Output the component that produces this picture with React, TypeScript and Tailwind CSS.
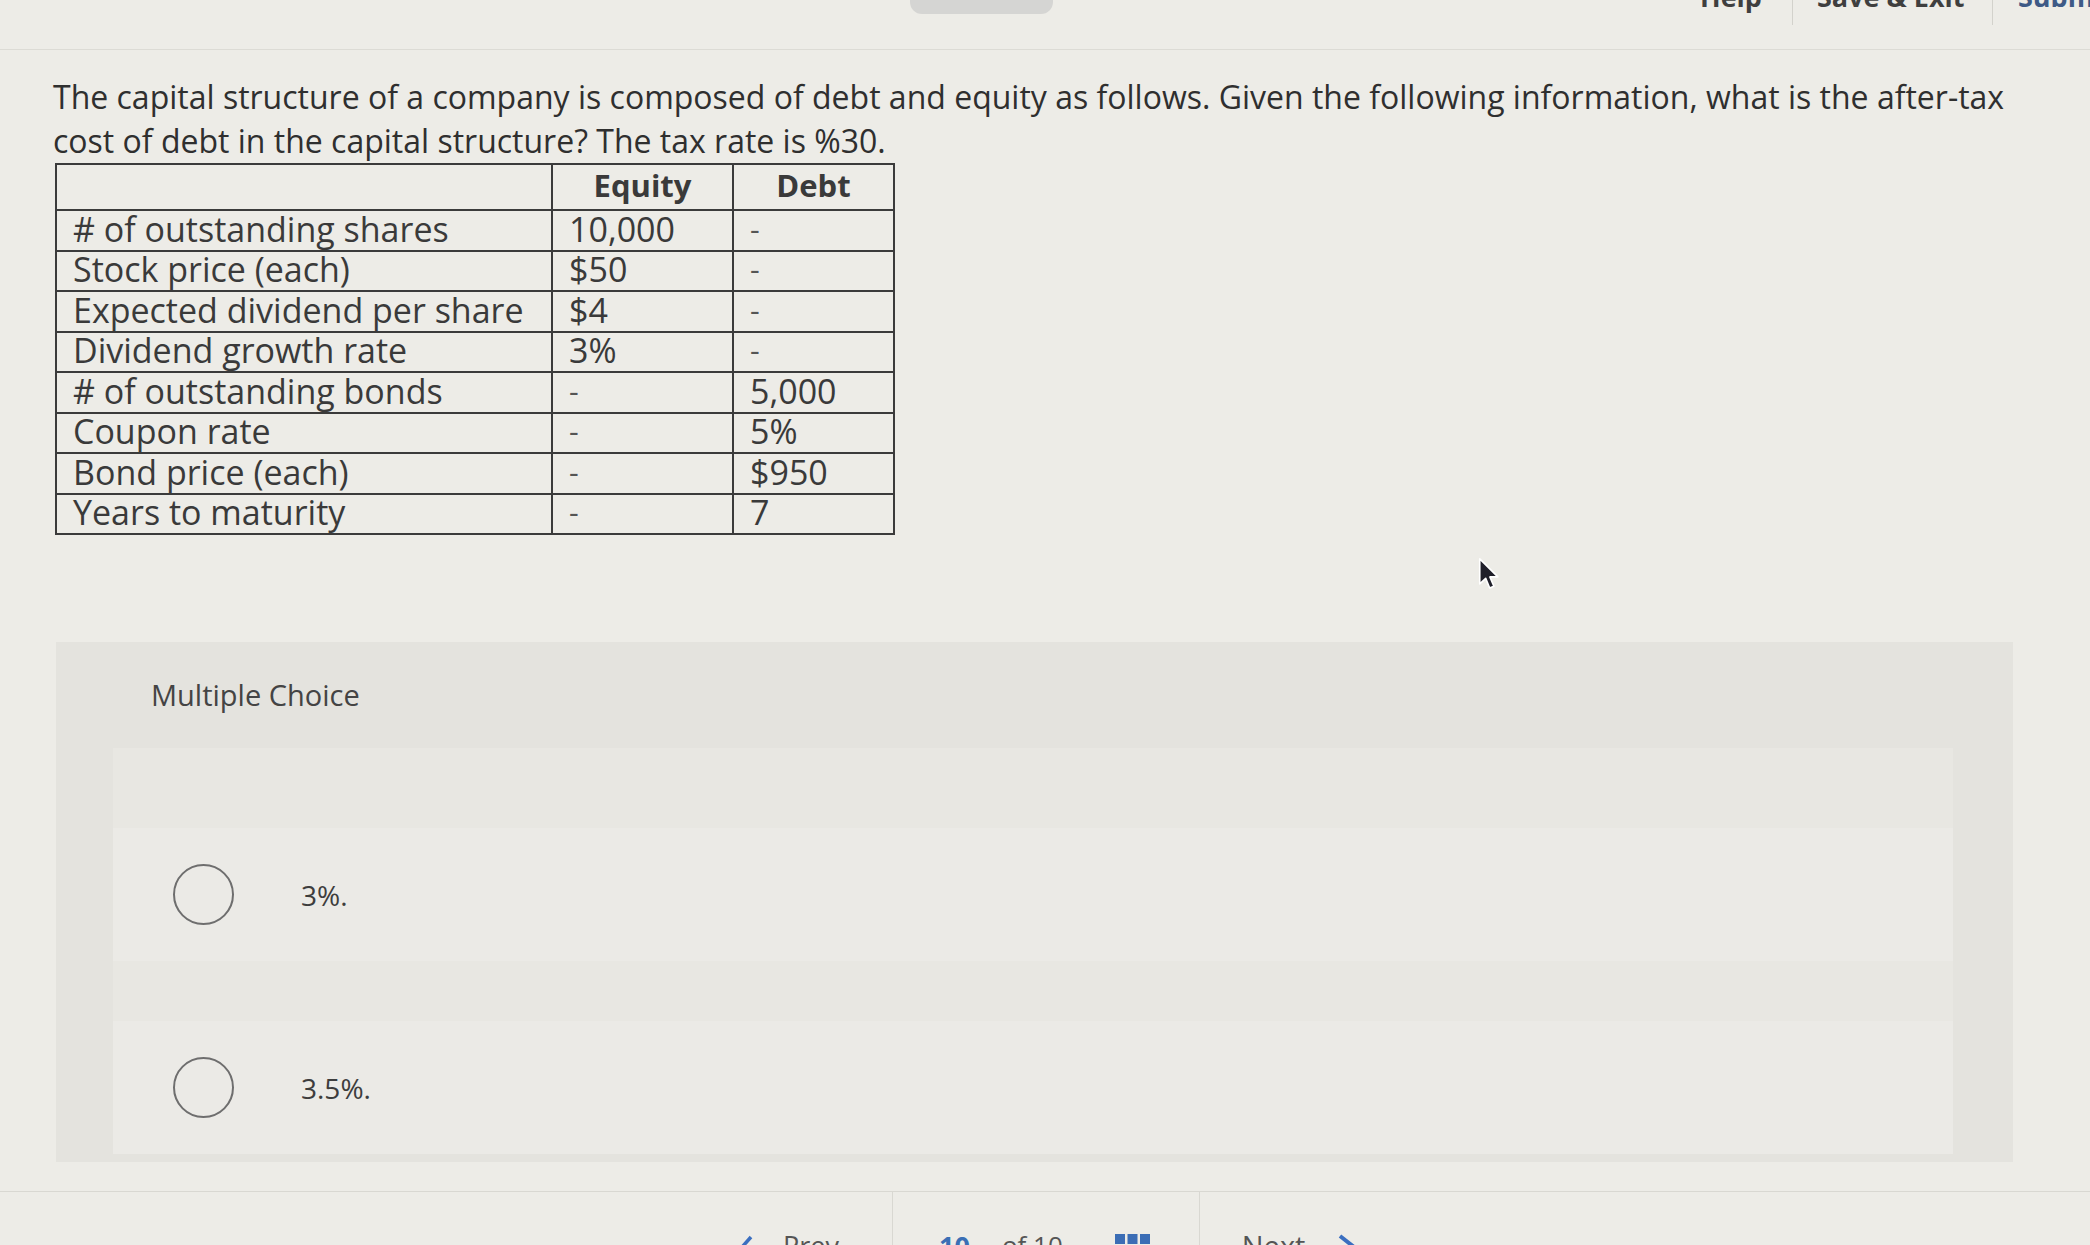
import React from "react";

const rows: [string, string, string][] = [
  ["# of outstanding shares", "10,000", "-"],
  ["Stock price (each)", "$50", "-"],
  ["Expected dividend per share", "$4", "-"],
  ["Dividend growth rate", "3%", "-"],
  ["# of outstanding bonds", "-", "5,000"],
  ["Coupon rate", "-", "5%"],
  ["Bond price (each)", "-", "$950"],
  ["Years to maturity", "-", "7"],
];

function Cell({ v, w }: { v: string; w: string }) {
  const dash = v === "-";
  return (
    <td
      className={`${w} h-[40.5px] border-2 border-[#3b3b3b] px-[16px] pt-0 pb-[3px] align-middle leading-none ${
        dash ? "text-[30px] text-[#555]" : "text-[34px] text-[#3a3a3a]"
      }`}
    >
      {v}
    </td>
  );
}

function Radio({ label }: { label: string }) {
  return (
    <div className="flex h-[133px] items-center bg-[#ebeae6] pl-[60px]">
      <div className="h-[61px] w-[61px] shrink-0 rounded-full border-2 border-[#6e6e6e]" />
      <span className="ml-[67px] text-[28px] text-[#3d3d3d]">{label}</span>
    </div>
  );
}

export default function App() {
  return (
    <div className="relative flex h-[1245px] w-[2090px] flex-col overflow-hidden bg-[#edece7] font-['Open_Sans',sans-serif]">
      {/* header */}
      <div className="flex h-[50px] shrink-0 items-start border-b border-[#dcdbd5]">
        <div className="ml-[910px] h-[14px] w-[143px] shrink-0 rounded-b-[12px] bg-[#d5d5d3]" />
        <div className="ml-[647px] flex shrink-0 items-start">
          <div className="w-[92px] shrink-0 -mt-[17px] text-[27px] font-bold leading-[27px] text-[#3f3f3f]">Help</div>
          <div className="h-[25px] w-px shrink-0 bg-[#d3d2cc]" />
          <div className="w-[199px] shrink-0 pl-[24px] -mt-[17px] whitespace-nowrap text-[27px] font-bold leading-[27px] text-[#3f3f3f]">
            Save &amp; Exit
          </div>
          <div className="h-[25px] w-px shrink-0 bg-[#d3d2cc]" />
          <div className="shrink-0 pl-[25px] -mt-[17px] whitespace-nowrap text-[27px] font-bold leading-[27px] text-[#3e5a86]">Submit</div>
        </div>
      </div>

      {/* question */}
      <div className="px-[53px]">
        <p className="mt-[25px] text-[32px] leading-[44px] text-[#2f2f2f]">
          <span className="whitespace-nowrap">
            The capital structure of a company is composed of debt and equity as follows. Given the following information, what is the after-tax
          </span>
          <br />
          <span className="whitespace-nowrap">cost of debt in the capital structure? The tax rate is %30.</span>
        </p>

        <table className="ml-[2px] border-collapse border-2 border-[#3b3b3b]">
          <tbody>
            <tr>
              <td className="h-[46px] w-[496px] border-2 border-[#3b3b3b] p-0" />
              <td className="h-[46px] w-[181px] border-2 border-[#3b3b3b] p-0 pb-[3px] text-center align-middle text-[31px] font-bold leading-none text-[#3a3a3a]">
                Equity
              </td>
              <td className="h-[46px] w-[161px] border-2 border-[#3b3b3b] p-0 pb-[3px] text-center align-middle text-[31px] font-bold leading-none text-[#3a3a3a]">
                Debt
              </td>
            </tr>
            {rows.map((r) => (
              <tr key={r[0]}>
                <Cell v={r[0]} w="w-[496px]" />
                <Cell v={r[1]} w="w-[181px]" />
                <Cell v={r[2]} w="w-[161px]" />
              </tr>
            ))}
          </tbody>
        </table>
      </div>

      {/* multiple choice panel */}
      <div className="ml-[56px] mt-[107px] w-[1957px] bg-[#e4e3de] pb-[8px]">
        <div className="flex h-[106px] items-center pl-[95px] text-[29px] text-[#444]">Multiple Choice</div>
        <div className="ml-[57px] mr-[60px] flex flex-col gap-[60px] bg-[#e8e7e2] pt-[80px]">
          <Radio label="3%." />
          <Radio label="3.5%." />
        </div>
      </div>

      {/* footer */}
      <div className="mt-[29px] h-[60px] shrink-0 border-t border-[#d9d8d2]">
        <div className="flex items-start">
          <div className="ml-[741px] mt-[43px] shrink-0">
            <svg width="12" height="22" viewBox="0 0 12 22">
              <polyline points="10,2 2,11 10,20" fill="none" stroke="#3b6fc0" strokeWidth="3.5" />
            </svg>
          </div>
          <div className="ml-[30px] mt-[40px] w-[109px] shrink-0 text-[27px] leading-[27px] text-[#555]">Prev</div>
          <div className="h-[60px] w-px shrink-0 bg-[#d9d8d2]" />
          <div className="ml-[46px] mt-[40px] shrink-0 text-[27px] font-bold leading-[27px] text-[#3b6fb5]">10</div>
          <div className="ml-[32px] mt-[40px] shrink-0 text-[26px] leading-[27px] text-[#555]">of 10</div>
          <div className="ml-[52px] mt-[42px] shrink-0">
            <svg width="35" height="35" viewBox="0 0 35 35">
              {[0, 1, 2].map((r) =>
                [0, 1, 2].map((c) => (
                  <rect key={`${r}-${c}`} x={c * 12.5} y={r * 12.5} width="10" height="10" fill="#3b6db5" />
                ))
              )}
            </svg>
          </div>
          <div className="ml-[49px] h-[60px] w-px shrink-0 bg-[#d9d8d2]" />
          <div className="ml-[42px] mt-[40px] shrink-0 text-[29px] leading-[27px] text-[#555]">Next</div>
          <div className="ml-[32px] mt-[42px] shrink-0">
            <svg width="20" height="26" viewBox="0 0 20 26">
              <polyline points="3,2 17,13 3,24" fill="none" stroke="#3b6fc0" strokeWidth="4" />
            </svg>
          </div>
        </div>
      </div>

      {/* mouse cursor */}
      <svg className="absolute left-[1478px] top-[557px]" width="21" height="34" viewBox="0 0 18 29">
        <path d="M1.5 1.5 L1.5 23 L6.6 18.2 L10 26.5 L13.6 25 L10.2 17 L17 17 Z" fill="#1f1f2a" stroke="#ffffff" strokeWidth="1.4" strokeLinejoin="round" />
      </svg>
    </div>
  );
}
